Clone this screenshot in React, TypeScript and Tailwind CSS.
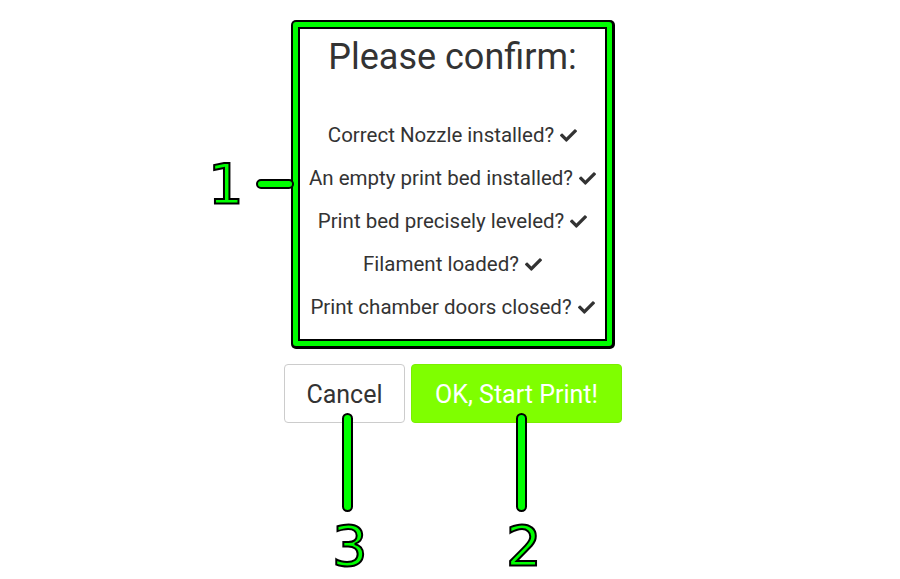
import React from 'react';
import { FaCheck } from 'react-icons/fa';

const CHECKS = [
  'Correct Nozzle installed?',
  'An empty print bed installed?',
  'Print bed precisely leveled?',
  'Filament loaded?',
  'Print chamber doors closed?',
];

// callout digit with green fill + black outline
const Callout: React.FC<{ n: string; className: string }> = ({ n, className }) => (
  <span
    className={`absolute text-[56px] leading-none text-[#00ff00] font-['DejaVu_Sans',sans-serif] [-webkit-text-stroke:2px_#000] ${className}`}
  >
    {n}
  </span>
);

const App: React.FC = () => {
  return (
    <div className="relative w-[900px] h-[579px] overflow-hidden bg-white font-['Roboto',sans-serif] text-[#333]">
      <div className="flex flex-col items-center pt-[20px] pl-[6px]">
        {/* highlighted dialog */}
        <div className="rounded-[5px] bg-black pt-[2px] pl-[2px] pr-[3px] pb-[3px]">
          <div className="rounded-[3px] bg-[#00ff00] p-[5px]">
            <div className="bg-black p-[2px]">
              <div className="flex w-[305px] h-[310px] flex-col items-center bg-white pt-[8px]">
                <h1 className="text-[36px] leading-[40px] font-normal">Please confirm:</h1>
                <ul className="mt-[37px] flex flex-col items-center">
                  {CHECKS.map((c) => (
                    <li key={c} className="flex h-[43px] items-center gap-[6px] text-[20.5px] whitespace-nowrap">
                      {c}
                      <FaCheck className="w-[17px] h-[17px] text-[#333]" />
                    </li>
                  ))}
                </ul>
              </div>
            </div>
          </div>
        </div>

        <div className="mt-[15px] flex gap-[6px]">
          <button className="h-[59px] w-[121px] rounded-[4px] border border-[#ccc] bg-white pt-[3px] text-[25px] text-[#333]">
            Cancel
          </button>
          <button className="h-[59px] w-[211px] rounded-[4px] border border-[#7aef00] bg-[#7fff00] pt-[3px] text-[25px] text-white">
            OK, Start Print!
          </button>
        </div>
      </div>

      {/* annotation callouts */}
      <div className="absolute left-[256px] top-[179px] h-[10px] w-[38px] rounded-full border-2 border-black bg-[#00ff00]" />
      <div className="absolute left-[342px] top-[413px] h-[99px] w-[11px] rounded-full border-2 border-black bg-[#00ff00]" />
      <div className="absolute left-[516px] top-[413px] h-[99px] w-[11px] rounded-full border-2 border-black bg-[#00ff00]" />
      <Callout n="1" className="left-[208px] top-[156px]" />
      <Callout n="3" className="left-[332px] top-[518px]" />
      <Callout n="2" className="left-[506px] top-[518px]" />
    </div>
  );
};

export default App;
